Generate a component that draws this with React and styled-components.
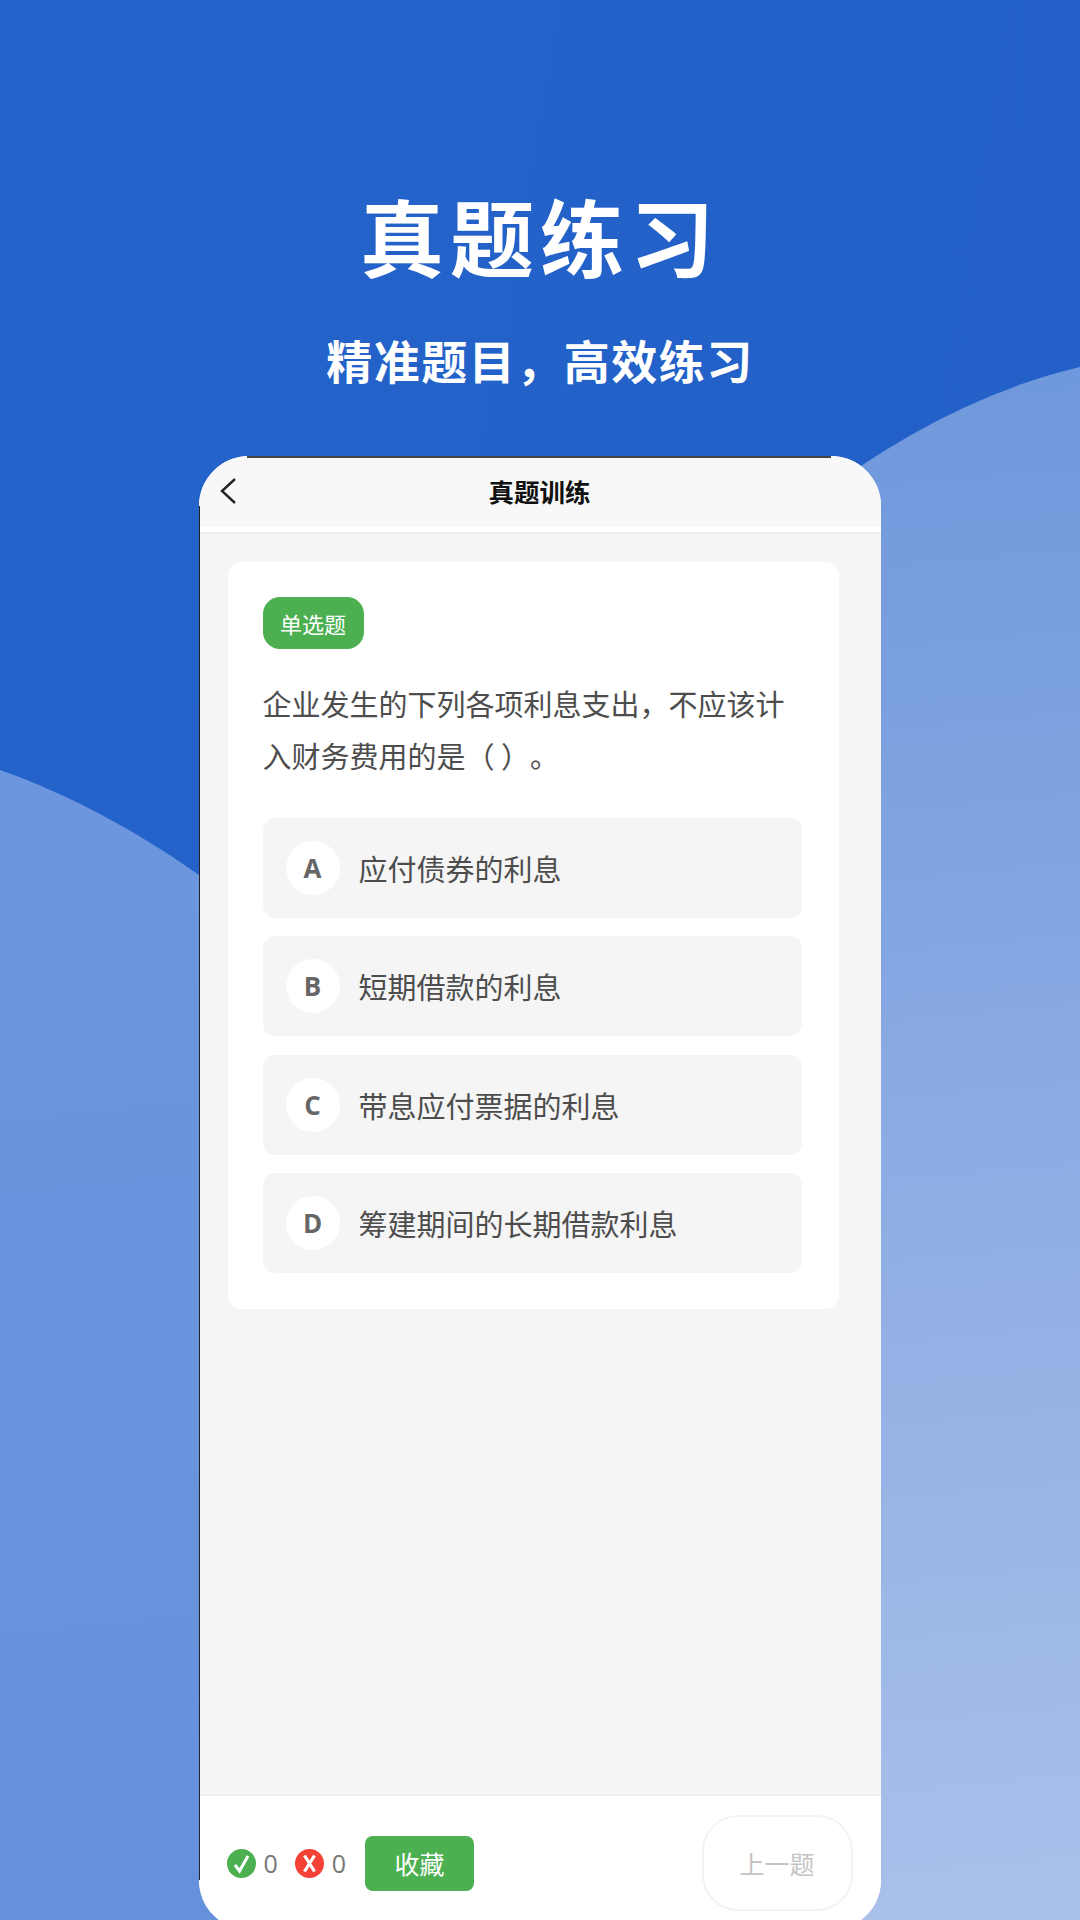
import React from 'react';
import styled, { createGlobalStyle } from 'styled-components';

const cjk = `"Noto Sans CJK SC", "Noto Sans", sans-serif`;

const GlobalStyle = createGlobalStyle`
  html, body {
    margin: 0;
    padding: 0;
    width: 1080px;
    height: 1920px;
    overflow: hidden;
    background: #2463c9;
    font-family: ${cjk};
  }
`;

const Page = styled.div`
  position: relative;
  width: 1080px;
  height: 1920px;
  overflow: hidden;
  background: linear-gradient(100deg, #2463ca 0%, #2260c8 100%);
`;

const Waves = styled.svg`
  position: absolute;
  inset: 0;
`;

const Stage = styled.div`
  position: relative;
  display: flex;
  flex-direction: column;
  align-items: center;
  padding-top: 179px;
`;

const Title = styled.h1`
  margin: 0;
  height: 112px;
  font-size: 84px;
  line-height: 112px;
  font-weight: 700;
  letter-spacing: 6px;
  color: #fff;
`;

const Subtitle = styled.h2`
  margin: 34px 0 0;
  height: 68px;
  font-size: 46px;
  line-height: 68px;
  font-weight: 700;
  letter-spacing: 1.5px;
  color: #fff;
`;

const Phone = styled.div`
  position: relative;
  display: flex;
  flex-direction: column;
  width: 682px;
  height: 1474px;
  margin: 63px 0 0 -1px;
  border-radius: 50px;
  box-sizing: border-box;
  overflow: hidden;
  background: #f5f5f5;

  &::before {
    content: '';
    position: absolute;
    z-index: 1;
    top: 0;
    left: 48px;
    right: 50px;
    height: 1.5px;
    background: #444;
  }

  &::after {
    content: '';
    position: absolute;
    z-index: 1;
    top: 50px;
    bottom: 50px;
    left: 0;
    width: 1.5px;
    background: #222;
  }
`;

const NavBar = styled.div`
  position: relative;
  flex: none;
  display: flex;
  align-items: center;
  justify-content: center;
  height: 71px;
  background: #f8f8f8;
  border-bottom: 5px solid #fff;
`;

const BackIcon = styled.svg`
  position: absolute;
  left: 20px;
  top: 21px;
`;

const NavTitle = styled.div`
  margin-bottom: 3px;
  font-size: 25.5px;
  font-weight: 700;
  color: #111;
`;

const Divider = styled.div`
  flex: none;
  height: 2px;
  background: #eeeeee;
`;

const Content = styled.div`
  flex: 1;
  padding: 28px 42px 0 29px;
`;

const Card = styled.div`
  display: flex;
  flex-direction: column;
  align-items: flex-start;
  height: 747px;
  box-sizing: border-box;
  padding: 35px 37px 0 35px;
  border-radius: 14px;
  background: #fff;
`;

const Tag = styled.div`
  display: flex;
  align-items: center;
  justify-content: center;
  width: 101px;
  height: 52px;
  border-radius: 17px;
  font-size: 22px;
  background: #4caf50;
  color: #fff;
`;

const Question = styled.p`
  margin: 28px 0 0;
  font-size: 29px;
  line-height: 52px;
  text-spacing-trim: space-all;
  color: #4d4d4d;
`;

const Options = styled.div`
  display: flex;
  flex-direction: column;
  gap: 18.4px;
  width: 100%;
  margin-top: 37px;
`;

const Option = styled.div`
  display: flex;
  align-items: center;
  gap: 19px;
  height: 100px;
  padding-left: 23px;
  border-radius: 12px;
  background: #f5f5f5;
`;

const Letter = styled.div`
  flex: none;
  display: flex;
  align-items: center;
  justify-content: center;
  width: 54px;
  height: 54px;
  border-radius: 50%;
  background: #fff;
  font-family: "Open Sans", sans-serif;
  font-size: 26px;
  font-weight: 700;
  color: #666;
`;

const OptionText = styled.div`
  font-size: 29px;
  color: #4d4d4d;
`;

const Footer = styled.div`
  flex: none;
  display: flex;
  align-items: center;
  height: 134px;
  padding: 0 28px 0 28px;
  border-top: 2px solid #f0f0f0;
  background: #fff;
`;

const Stat = styled.div`
  display: flex;
  align-items: center;
  gap: 8px;
  margin-right: 17px;
  font-family: "Open Sans", sans-serif;
  font-size: 25px;
  color: #777;
`;

const SaveButton = styled.div`
  display: flex;
  align-items: center;
  justify-content: center;
  width: 109px;
  height: 55px;
  margin-left: 2px;
  border-radius: 8px;
  font-size: 25px;
  background: #4caf50;
  color: #fff;
`;

const PrevButton = styled.div`
  display: flex;
  align-items: center;
  justify-content: center;
  width: 151px;
  height: 96px;
  margin-left: auto;
  box-sizing: border-box;
  border: 2px solid #f3f3f3;
  border-radius: 36px;
  font-size: 25px;
  color: #c4c4c4;
`;

const options = [
  ['A', '应付债券的利息'],
  ['B', '短期借款的利息'],
  ['C', '带息应付票据的利息'],
  ['D', '筹建期间的长期借款利息'],
];

const App = () => (
  <Page>
    <GlobalStyle />
    <Waves width="1080" height="1920" viewBox="0 0 1080 1920">
      <defs>
        <linearGradient id="waveLeft" gradientUnits="userSpaceOnUse" x1="0" y1="780" x2="120" y2="1920">
          <stop offset="0" stopColor="#6c97de" />
          <stop offset="1" stopColor="#6590dc" />
        </linearGradient>
        <linearGradient id="waveRight" gradientUnits="userSpaceOnUse" x1="860" y1="400" x2="1000" y2="1920">
          <stop offset="0" stopColor="#7098dc" />
          <stop offset="1" stopColor="#a9c0ea" />
        </linearGradient>
      </defs>
      <path
        d="M0 770 C 70 795 135 830 199 875 L 280 940 L 280 1920 L 0 1920 Z"
        fill="url(#waveLeft)"
      />
      <path
        d="M1080 367 Q 940 400 800 510 L 800 1920 L 1080 1920 Z"
        fill="url(#waveRight)"
      />
    </Waves>
    <Stage>
      <Title>真题练习</Title>
      <Subtitle>精准题目，高效练习</Subtitle>
      <Phone>
        <NavBar>
          <BackIcon width="18" height="28" viewBox="0 0 18 28">
            <path d="M16 2 L3 14 L16 26" fill="none" stroke="#222" strokeWidth="2.4" />
          </BackIcon>
          <NavTitle>真题训练</NavTitle>
        </NavBar>
        <Divider />
        <Content>
          <Card>
            <Tag>单选题</Tag>
            <Question>企业发生的下列各项利息支出，不应该计入财务费用的是（ ）。</Question>
            <Options>
              {options.map(([letter, text]) => (
                <Option key={letter}>
                  <Letter>{letter}</Letter>
                  <OptionText>{text}</OptionText>
                </Option>
              ))}
            </Options>
          </Card>
        </Content>
        <Footer>
          <Stat>
            <svg width="29" height="29" viewBox="0 0 29 29">
              <circle cx="14.5" cy="14.5" r="14.5" fill="#4caf50" />
              <path d="M8 16 L12.5 22 L21 7" fill="none" stroke="#fff" strokeWidth="3" />
            </svg>
            0
          </Stat>
          <Stat>
            <svg width="29" height="29" viewBox="0 0 29 29">
              <circle cx="14.5" cy="14.5" r="14.5" fill="#f44336" />
              <path d="M9.5 6.5 L19.5 22.5 M19.5 6.5 L9.5 22.5" fill="none" stroke="#fff" strokeWidth="3.2" />
            </svg>
            0
          </Stat>
          <SaveButton>收藏</SaveButton>
          <PrevButton>上一题</PrevButton>
        </Footer>
      </Phone>
    </Stage>
  </Page>
);

export default App;
